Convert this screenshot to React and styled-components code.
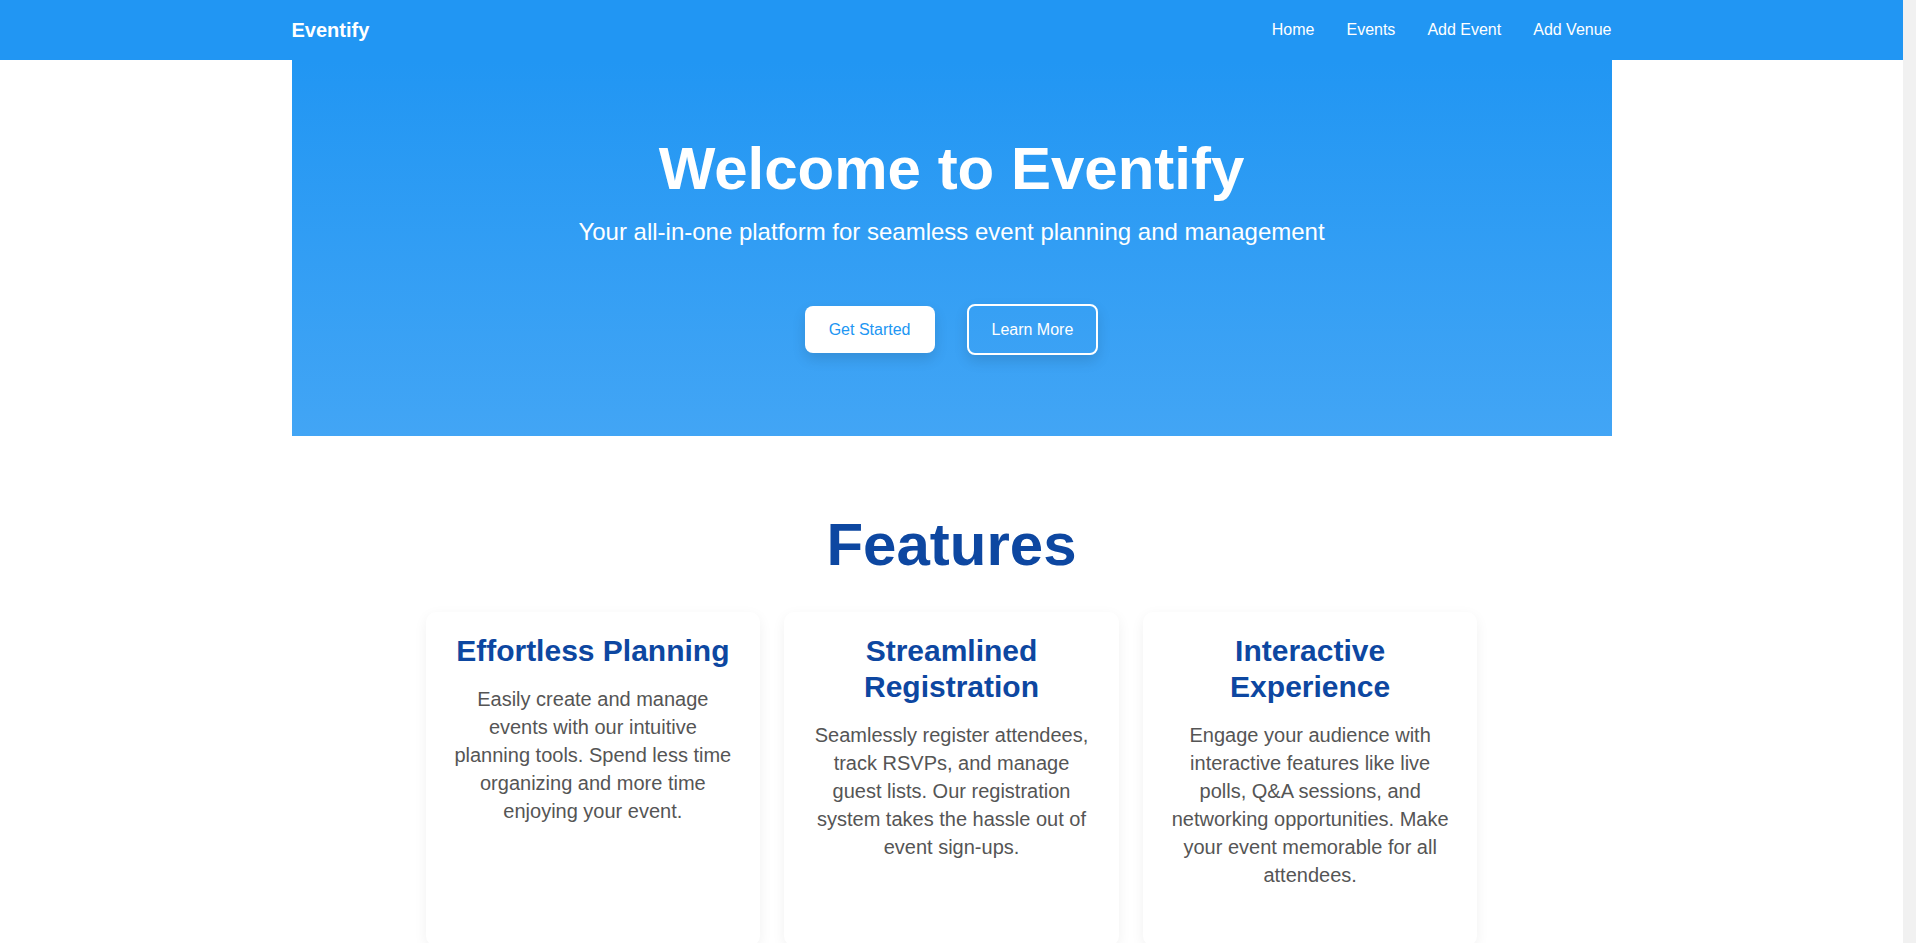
import React from "react";
import styled, { createGlobalStyle } from "styled-components";

const GlobalStyle = createGlobalStyle`
  * { box-sizing: border-box; }
  html { margin: 0; padding: 0; background: #f1f1f1; }
  body {
    margin: 0 13px 0 0;
    padding: 0;
    font-family: "Liberation Sans", Arial, sans-serif;
    background: #ffffff;
    color: #333;
  }
`;

const NavBar = styled.nav`
  background: #2196f3;
  height: 60px;
`;

const NavInner = styled.div`
  max-width: 1320px;
  height: 100%;
  margin: 0 auto;
  display: flex;
  align-items: center;
  justify-content: space-between;
`;

const Brand = styled.a`
  color: #fff;
  font-size: 20px;
  font-weight: 700;
  text-decoration: none;
`;

const NavLinks = styled.div`
  display: flex;
  gap: 32px;
`;

const NavLink = styled.a`
  color: #fff;
  font-size: 16px;
  text-decoration: none;
`;

const Hero = styled.section`
  max-width: 1320px;
  margin: 0 auto;
  background: linear-gradient(180deg, #2196f3 0%, #42a5f5 100%);
  color: #fff;
  text-align: center;
  padding: 74px 24px 81px;
`;

const HeroTitle = styled.h1`
  margin: 0 0 15px;
  font-size: 60px;
  font-weight: 700;
  line-height: normal;
`;

const HeroSubtitle = styled.p`
  margin: 0 0 58px;
  font-size: 24px;
  line-height: normal;
`;

const ButtonRow = styled.div`
  display: flex;
  justify-content: center;
  align-items: center;
  gap: 32px;
`;

const HeroButton = styled.button`
  font-family: inherit;
  font-size: 16px;
  border-radius: 8px;
  cursor: pointer;
  box-shadow: 0 6px 14px rgba(0, 0, 0, 0.12);
  background: ${(p) => (p.$outline ? "transparent" : "#ffffff")};
  color: ${(p) => (p.$outline ? "#ffffff" : "#2196f3")};
  border: ${(p) => (p.$outline ? "2px solid #ffffff" : "none")};
  height: ${(p) => (p.$outline ? "51px" : "47px")};
  padding: 0 ${(p) => (p.$outline ? "23px" : "24px")};
`;

const Features = styled.section`
  padding: 74px 0 60px;
  text-align: center;
`;

const FeaturesTitle = styled.h2`
  margin: 0 0 33px;
  font-size: 60px;
  font-weight: 700;
  line-height: normal;
  color: #0d47a1;
`;

const CardGrid = styled.div`
  max-width: 1100px;
  margin: 0 auto;
  padding: 0 24px;
  display: grid;
  grid-template-columns: repeat(3, 1fr);
  gap: 24px;
`;

const Card = styled.div`
  background: #fff;
  border-radius: 10px;
  box-shadow: 0 4px 14px rgba(0, 0, 0, 0.06);
  padding: 21px 24px 24px;
  min-height: 334px;
`;

const CardTitle = styled.h3`
  margin: 0 0 16px;
  font-size: 30px;
  font-weight: 700;
  line-height: 36px;
  color: #0d47a1;
`;

const CardText = styled.p`
  margin: 0;
  font-size: 20px;
  line-height: 28px;
  color: #555;
`;

const features = [
  {
    title: "Effortless Planning",
    text: "Easily create and manage events with our intuitive planning tools. Spend less time organizing and more time enjoying your event.",
  },
  {
    title: "Streamlined Registration",
    text: "Seamlessly register attendees, track RSVPs, and manage guest lists. Our registration system takes the hassle out of event sign-ups.",
  },
  {
    title: "Interactive Experience",
    text: "Engage your audience with interactive features like live polls, Q&A sessions, and networking opportunities. Make your event memorable for all attendees.",
  },
];

export default function App() {
  return (
    <>
      <GlobalStyle />
      <NavBar>
        <NavInner>
          <Brand href="#">Eventify</Brand>
          <NavLinks>
            <NavLink href="#">Home</NavLink>
            <NavLink href="#">Events</NavLink>
            <NavLink href="#">Add Event</NavLink>
            <NavLink href="#">Add Venue</NavLink>
          </NavLinks>
        </NavInner>
      </NavBar>
      <Hero>
        <HeroTitle>Welcome to Eventify</HeroTitle>
        <HeroSubtitle>
          Your all-in-one platform for seamless event planning and management
        </HeroSubtitle>
        <ButtonRow>
          <HeroButton>Get Started</HeroButton>
          <HeroButton $outline>Learn More</HeroButton>
        </ButtonRow>
      </Hero>
      <Features>
        <FeaturesTitle>Features</FeaturesTitle>
        <CardGrid>
          {features.map((f) => (
            <Card key={f.title}>
              <CardTitle>{f.title}</CardTitle>
              <CardText>{f.text}</CardText>
            </Card>
          ))}
        </CardGrid>
      </Features>
    </>
  );
}
